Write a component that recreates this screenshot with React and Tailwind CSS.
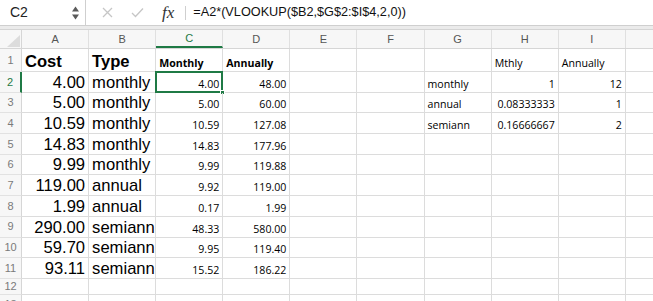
import React from "react";

const COLS = ["A", "B", "C", "D", "E", "F", "G", "H", "I"];

const data = [
  ["4.00", "monthly", "4.00", "48.00"],
  ["5.00", "monthly", "5.00", "60.00"],
  ["10.59", "monthly", "10.59", "127.08"],
  ["14.83", "monthly", "14.83", "177.96"],
  ["9.99", "monthly", "9.99", "119.88"],
  ["119.00", "annual", "9.92", "119.00"],
  ["1.99", "annual", "0.17", "1.99"],
  ["290.00", "semiann", "48.33", "580.00"],
  ["59.70", "semiann", "9.95", "119.40"],
  ["93.11", "semiann", "15.52", "186.22"],
];

const lookup = {
  2: ["monthly", "1", "12"],
  3: ["annual", "0.08333333", "1"],
  4: ["semiann", "0.16666667", "2"],
};

const big = "font-['Liberation_Sans',Arial,sans-serif] text-[16.6px] leading-[18px]";
const small = "font-['Open_Sans',sans-serif] text-[10.6px] leading-[14px] pb-[1px]";

// one grid cell; align = left | right
const Cell = ({ children, align = "left", font = small, className = "" }) => (
  <div
    className={`w-[67.1px] shrink-0 h-full border-r border-b border-[#dcdcdc] flex items-end overflow-hidden whitespace-nowrap text-black ${
      align === "right" ? "justify-end pr-[3px]" : "justify-start pl-[3px]"
    } ${font} ${className}`}
  >
    {children}
  </div>
);

const RowHead = ({ n, active }) => (
  <div
    className={`w-[22px] shrink-0 h-full flex items-center justify-center text-[11px] font-['Liberation_Sans',sans-serif] bg-[#f7f7f7] border-b border-[#e2e2e2] ${
      active ? "text-[#1f7a45] border-r-2 border-r-[#1f7a45]" : "text-[#7a7a7a] border-r border-r-[#d6d6d6]"
    }`}
  >
    {n}
  </div>
);

export default function App() {
  return (
    <div className="w-[653px] h-[301px] overflow-hidden bg-white select-none">
      {/* formula bar */}
      <div className="h-[26px] flex items-center border-b border-[#cfcfcf]">
        <div className="w-[86px] h-full flex items-center justify-between pl-[10px] pr-[5px] border-r border-[#cfcfcf]">
          <span className="font-['Liberation_Sans',sans-serif] text-[14px] text-[#222]">C2</span>
          <svg width="9" height="18" viewBox="0 0 9 18">
            <path d="M4.5 2.5 L8 7.5 L1 7.5 Z" fill="#5a5a5a" />
            <path d="M4.5 15.5 L8 10.5 L1 10.5 Z" fill="#5a5a5a" />
          </svg>
        </div>
        <div className="flex items-center gap-[18px] pl-[16px]">
          <svg width="11" height="11" viewBox="0 0 11 11">
            <path d="M1 1 L10 10 M10 1 L1 10" stroke="#c6c6c6" strokeWidth="1.3" />
          </svg>
          <svg width="13" height="11" viewBox="0 0 13 11">
            <path d="M1 6 L4.5 9.5 L12 1.5" stroke="#c6c6c6" strokeWidth="1.3" fill="none" />
          </svg>
          <span className="font-['Liberation_Serif',serif] italic text-[17px] text-[#333]">fx</span>
        </div>
        <div className="w-px h-[14px] bg-[#cfcfcf] ml-[11px]" />
        <span className="pl-[7px] font-['Liberation_Sans',sans-serif] text-[12.7px] text-[#111]">
          =A2*(VLOOKUP($B2,$G$2:$I$4,2,0))
        </span>
      </div>
      <div className="h-[4px] bg-[#ebebeb] border-b border-[#d4d4d4]" />

      {/* column headers */}
      <div className="h-[19px] flex bg-[#f7f7f7] border-b border-[#d6d6d6]">
        <div className="w-[22px] shrink-0 h-full border-r border-[#d6d6d6] flex items-end justify-end">
          <svg width="16" height="14" viewBox="0 0 16 14">
            <path d="M15 1 L15 13 L2 13 Z" fill="#dcdcdc" />
          </svg>
        </div>
        {COLS.map((c) => (
          <div
            key={c}
            className={`w-[67.1px] shrink-0 h-full flex items-center justify-center border-r border-[#e0e0e0] font-['Liberation_Sans',sans-serif] text-[11px] ${
              c === "C" ? "text-[#1f7a45] border-b-2 border-b-[#1f7a45]" : "text-[#555]"
            }`}
          >
            {c}
          </div>
        ))}
        <div className="flex-1" />
      </div>

      {/* row 1 */}
      <div className="h-[23px] flex">
        <RowHead n={1} />
        <Cell font={`${big} font-bold`}>Cost</Cell>
        <Cell font={`${big} font-bold`}>Type</Cell>
        <Cell font={`${small} font-bold`}>Monthly</Cell>
        <Cell font={`${small} font-bold`}>Annually</Cell>
        <Cell />
        <Cell />
        <Cell />
        <Cell>Mthly</Cell>
        <Cell>Annually</Cell>
        <div className="flex-1 border-b border-[#dcdcdc]" />
      </div>

      {data.map((r, i) => {
        const n = i + 2;
        const lk = lookup[n];
        return (
          <div key={n} className="h-[20.7px] flex">
            <RowHead n={n} active={n === 2} />
            <Cell align="right" font={big}>{r[0]}</Cell>
            <Cell font={big}>{r[1]}</Cell>
            <div className="relative">
              <Cell align="right">{r[2]}</Cell>
              {n === 2 && (
                <div className="absolute left-[-1px] top-[-1px] w-[68.1px] h-[21.7px] border-2 border-[#1f7a45]">
                  <div className="absolute right-[-4px] bottom-[-4px] w-[5px] h-[5px] bg-[#1f7a45] border border-white" />
                </div>
              )}
            </div>
            <Cell align="right">{r[3]}</Cell>
            <Cell />
            <Cell />
            <Cell>{lk ? lk[0] : ""}</Cell>
            <Cell align="right">{lk ? lk[1] : ""}</Cell>
            <Cell align="right">{lk ? lk[2] : ""}</Cell>
            <div className="flex-1 border-b border-[#dcdcdc]" />
          </div>
        );
      })}

      {/* row 12 and the start of row 13 */}
      <div className="h-[16px] flex">
        <RowHead n={12} />
        {COLS.map((c) => (
          <Cell key={c} />
        ))}
        <div className="flex-1 border-b border-[#dcdcdc]" />
      </div>
      <div className="h-[20px] flex">
        <RowHead n={13} />
        {COLS.map((c) => (
          <Cell key={c} />
        ))}
        <div className="flex-1 border-b border-[#dcdcdc]" />
      </div>
    </div>
  );
}
